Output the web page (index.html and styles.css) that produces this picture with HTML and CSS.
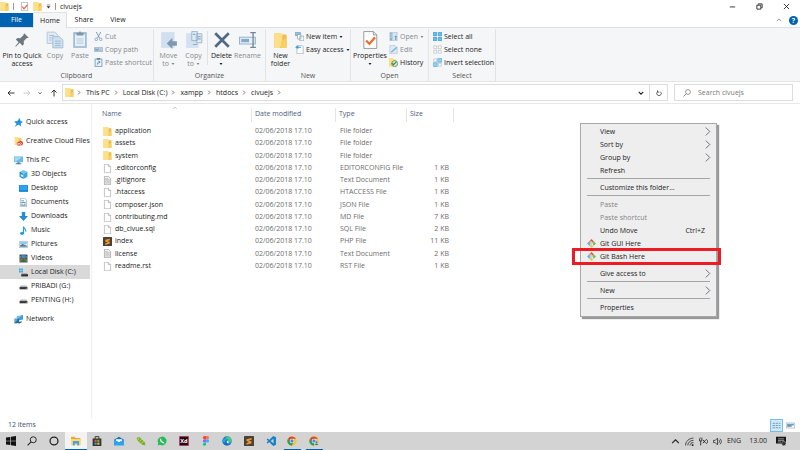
FILE: index.html
```html
<!DOCTYPE html>
<html lang="en">
<head>
<meta charset="utf-8">
<title>civuejs</title>
<link rel="stylesheet" href="styles.css">
</head>
<body>
<svg class="sprite" aria-hidden="true">
  <symbol id="folder" viewBox="0 0 16 16"><path fill="#e9bd4f" d="M1 0h8v2h6v14H1z"/><path fill="#ffe08a" d="M1 0h9v11l-1 5H1z"/><path fill="#f8d06c" d="M9 9l6-2v9H9z"/></symbol>
  <symbol id="page" viewBox="0 0 16 16"><path fill="#fff" stroke="#999" d="M2.5.5h7l4 4v11h-11z"/><path fill="#e8e8e8" stroke="#999" d="M9.500.5v4h4"/></symbol>
  <symbol id="text" viewBox="0 0 16 16"><path fill="#f0f0f0" stroke="#888" d="M2.500.5h7l4 4v11h-11z"/><path stroke="#aaa" d="M4 4.500h5M4 6.500h8M4 8.500h8M4 10.500h8M4 12.500h8"/></symbol>
  <symbol id="sublime" viewBox="0 0 16 16"><rect width="16" height="16" rx="1" fill="#45423f"/><path fill="#f79a1d" d="M4 5l8-2v3L7.500 7.200 12 8.600v2.800L4 14v-3l4.500-1.400L4 8z"/></symbol>
  <symbol id="check" viewBox="0 0 16 16"><path fill="#fff" stroke="#888" d="M2.500.5h11v15h-11z"/><path fill="none" stroke="#e05a3a" stroke-width="2" d="M4 8l3 4 6-7"/></symbol>
  <symbol id="star" viewBox="0 0 16 16"><path fill="#2592dd" d="M10 0l1.500 5 4.500 2-4 2.500.5 5.500L8 11.500 1 16l3.500-6L0 6l6-.5z"/></symbol>
  <symbol id="cc" viewBox="0 0 16 16"><path fill="#ffe08a" d="M1 0h7v2h5v12H1z"/><path fill="#f0c65b" d="M8 2h5v12H8z"/><circle cx="8" cy="12" r="3.500" fill="#d83b26"/><circle cx="12" cy="11" r="4" fill="#d83b26"/><path fill="none" stroke="#fff" stroke-width="1.200" d="M11 13l-4-2a1.500 1.500 0 1 0 0 2.500l4-3a1.500 1.500 0 1 1 0 2.500"/></symbol>
  <symbol id="pc" viewBox="0 0 16 16"><path fill="#5aa9d8" d="M0 1h16v10H0z"/><path fill="#a9dcf5" d="M1 2h14L3 10H1z"/><path fill="#6bc0ec" d="M15 2v8H3z"/><path fill="#527996" d="M6 11h4v2h3v1.500H3V13h3z"/></symbol>
  <symbol id="cube" viewBox="0 0 16 16"><path fill="#74c7ec" d="M8 0l7 3-7 3.500L1 3z"/><path fill="#1687d0" d="M1 3l7 3.500V16l-7-4z"/><path fill="#38a9e4" d="M15 3L8 6.500V16l7-4z"/><path fill="#d7f2ff" d="M3 7l4 2v4l-4-2z"/></symbol>
  <symbol id="desktop" viewBox="0 0 16 16"><path fill="#1482d2" d="M0 2h16v12H0z"/><path fill="#2da4ec" d="M1 3h14v8H1z"/></symbol>
  <symbol id="docs" viewBox="0 0 16 16"><path fill="#fff" stroke="#7694aa" d="M2.500.5h8l3 3v12h-11z"/><path stroke="#4e88ae" stroke-width="1.500" d="M4 5h5M4 8h8M4 11h3M9 11h3M4 13h8"/></symbol>
  <symbol id="down" viewBox="0 0 16 16"><path fill="#258bd2" d="M5 0h6v7h5l-8 9-8-9h5z"/></symbol>
  <symbol id="music" viewBox="0 0 16 16"><path fill="none" stroke="#249be3" stroke-width="2" d="M8 13V1c1 4 5 4 4 9"/><ellipse cx="5.500" cy="13" rx="3.500" ry="3" fill="#249be3"/></symbol>
  <symbol id="pics" viewBox="0 0 16 16"><path fill="#eef7fb" stroke="#8b9da9" d="M.5 2.500h15v11H.5z"/><path fill="#7dc3e9" d="M2 4h12v3H2z"/><path fill="#54799a" d="M2 9l5-2 7 3v2H2z"/></symbol>
  <symbol id="video" viewBox="0 0 16 16"><path fill="#333" d="M1 1h14v14H1z"/><path stroke="#ddd" stroke-dasharray="1 1.500" stroke-width="1.500" d="M2.500 1v14M13.500 1v14"/><path fill="#3e91c9" d="M4 2h8v5H4z"/><path fill="#bd9c43" d="M4 8h8v6H4z"/><path fill="#396c41" d="M4 11l4-3 4 3v3H4z"/></symbol>
  <symbol id="drive" viewBox="0 0 16 16"><path fill="#b4b4b4" d="M3 6h10l2 3H1z"/><path fill="#353535" d="M1 9h14v4H1z"/><path fill="#7bd184" d="M12 10.500h2v1h-2z"/></symbol>
  <symbol id="cdrive" viewBox="0 0 16 16"><path fill="#27a4e2" d="M0 1h3v3H0zM4 1h3v3H4zM0 5h3v3H0zM4 5h3v3H4z"/><path fill="#aaa" d="M5 9h9l1 2H4z"/><path fill="#333" d="M4 11h12v4H4z"/></symbol>
  <symbol id="network" viewBox="0 0 16 16"><path fill="#3f9bd4" d="M5 2l11-2v8L5 10z"/><path fill="#83caec" d="M6 3l9-2-9 6z"/><path fill="#236da5" d="M1 6l8 1v7l-8 1z"/><path fill="#65b7e1" d="M2 7l5 1-5 5z"/><path fill="#316d98" d="M9 12l5-1v2l-6 3z"/></symbol>
  <symbol id="git" viewBox="0 0 16 16"><path fill="#f05133" d="M8 0l4 4-4 4-4-4z"/><path fill="#69c06a" d="M12 4l4 4-4 4-4-4z"/><path fill="#f3c24d" d="M8 8l4 4-4 4-4-4z"/><path fill="#68b3e5" d="M4 4l4 4-4 4-4-4z"/><path fill="none" stroke="#fff" stroke-width="1.300" d="M6 3l4 5v4M7 5v6"/></symbol>
  <symbol id="chrome" viewBox="0 0 16 16"><circle cx="8" cy="8" r="7.500" fill="#fbc52d"/><path fill="#df4435" d="M1.500 4.300A7.500 7.500 0 0 1 14.500 4.500H8L4.700 9.500z"/><path fill="#28a35a" d="M1.500 4.300A7.500 7.500 0 0 0 7.500 15.500L10.800 10 5 9.500z"/><circle cx="8" cy="8" r="3.600" fill="#fff"/><circle cx="8" cy="8" r="2.700" fill="#4285f4"/></symbol>
  <symbol id="chev" viewBox="0 0 8 8"><path fill="none" stroke="currentColor" d="M2.500 1l3 3-3 3"/></symbol>
  <symbol id="more" viewBox="0 0 8 8"><path fill="none" stroke="currentColor" stroke-width=".8" d="M2.500.5L6 4 2.500 7.500"/></symbol>
  <symbol id="vee" viewBox="0 0 8 8"><path fill="none" stroke="currentColor" stroke-width="1.500" d="M1 2.500l3 3 3-3"/></symbol>
  <symbol id="hat" viewBox="0 0 8 8"><path fill="none" stroke="currentColor" d="M1 5.500l3-3 3 3"/></symbol>
  <symbol id="tri" viewBox="0 0 8 8"><path fill="currentColor" d="M1 2h6L4 6z"/></symbol>
  <symbol id="search" viewBox="0 0 16 16"><circle cx="10" cy="6" r="4.800" fill="none" stroke="currentColor" stroke-width="1.500"/><path stroke="currentColor" stroke-width="1.700" d="M6.500 9.500L1 15"/></symbol>
  <symbol id="left" viewBox="0 0 16 16"><path fill="none" stroke="currentColor" stroke-width="1.800" d="M15 8H2M7 3L2 8l5 5"/></symbol>
</svg>

<div class="window">
  <header class="titlebar">
    <svg class="ic"><use href="#folder"/></svg><span class="bar"></span>
    <svg class="ic"><use href="#check"/></svg>
    <svg class="ic"><use href="#folder"/></svg>
    <svg class="tiny customize" viewBox="0 0 8 8"><path fill="#333" d="M1 1h6v1H1zM1 3.500h6L4 7z"/></svg><span class="bar second"></span>
    <h1>civuejs</h1>
    <div class="winbtns">
      <button aria-label="Minimize"><svg viewBox="0 0 8 8"><path stroke="#222" d="M1 4.500h6"/></svg></button>
      <button aria-label="Restore"><svg viewBox="0 0 8 8"><path fill="none" stroke="#222" d="M1 2.500h4.500V7H1zM2.500 2V1H7v4.500H6"/></svg></button>
      <button aria-label="Close"><svg viewBox="0 0 8 8"><path stroke="#222" d="M1 1l6 6M7 1L1 7"/></svg></button>
    </div>
  </header>
  <nav class="tabs">
    <button class="file">File</button><button class="current">Home</button><button>Share</button><button>View</button>
    <span class="help"><button aria-label="Collapse ribbon"><svg class="mid"><use href="#hat"/></svg></button><button aria-label="Help" class="q">?</button></span>
  </nav>

  <section class="ribbon">
    <div class="group clipboard">
      <div class="tools">
        <button class="big"><svg viewBox="0 0 16 16"><path fill="#6e7880" d="M10 2l4 4-2 .5-2.500 2.500.2 2.500L8.500 13 6 10.500 2.500 14 2 13.500 5 10 2.500 7.500 4 6.300l2.500.2L9 4z"/></svg><span>Pin to Quick<br>access</span></button>
        <button class="big dim"><svg viewBox="0 0 16 16"><path fill="#dfeaf5" stroke="#a9bfd3" stroke-width=".7" d="M1 1h7l2 2v8H1z"/><path fill="#cfe0f0" stroke="#9db6cd" stroke-width=".7" d="M6 5h6l3 3v7H6z"/><path stroke="#9bb7d1" stroke-width=".8" d="M8 9h5M8 11h5M8 13h5M3 4h4M3 6h2M3 8h2"/></svg><span>Copy</span></button>
        <button class="big dim"><svg viewBox="0 0 16 16"><path fill="#9fb9d1" d="M2 1h12v14H2z"/><path fill="#e6f0f9" d="M3.500 3h9v10.500h-9z"/><path fill="#8195a8" d="M5 1.500h2L8 0l1 1.500h2V4H5z"/><path stroke="#bdd1e3" d="M5 7h6M5 9h6M5 11h6"/></svg><span>Paste</span></button>
        <div class="stack dim">
          <button><svg viewBox="0 0 16 16"><path stroke="#7590a9" stroke-width="1.500" d="M4 0l6 11M12 0L6 11"/><circle cx="4" cy="13" r="2.300" fill="none" stroke="#7ca4c7" stroke-width="1.500"/><circle cx="12" cy="13" r="2.300" fill="none" stroke="#7ca4c7" stroke-width="1.500"/></svg>Cut</button>
          <button><svg viewBox="0 0 16 16"><path fill="#b8d1e6" stroke="#86a4be" d="M.5 4.500h15v7H.5z"/><path fill="none" stroke="#66839c" d="M2 6l1.500 4L5 7l1.500 3L8 6M10 9.500h1M12 9.500h1"/></svg>Copy path</button>
          <button><svg viewBox="0 0 16 16"><path fill="#91aec8" d="M1 1h14v15H1z"/><path fill="#edf5fc" d="M3 3h10v11H3z"/><path fill="#6f8499" d="M5 0h6v3H5z"/><path fill="none" stroke="#5080ad" stroke-width="1.500" d="M6 12c0-4 1-5 4-5M8 5l3 2-3 3"/></svg>Paste shortcut</button>
        </div>
      </div>
      <div class="caption">Clipboard</div>
    </div>
    <div class="group organize">
      <div class="tools">
        <button class="big dim"><svg viewBox="0 0 16 16"><path fill="#d0e0ef" d="M1 1h12v14H1z"/><path fill="#7f99b0" d="M6 11l5-5v3h4v4h-4v3z"/></svg><span>Move<br>to <svg class="tiny"><use href="#tri"/></svg></span></button>
        <button class="big dim"><svg viewBox="0 0 16 16"><path fill="#d2e2f1" d="M1 2h11v13H1z"/><path fill="#dceaf6" stroke="#91abc2" stroke-width=".7" d="M6 .5h5v8H6zM10 2.500h5v8h-5z"/><path stroke="#91abc2" d="M7 3h2M11 5h3M11 7h3M7 12h4"/></svg><span>Copy<br>to <svg class="tiny"><use href="#tri"/></svg></span></button>
        <span class="split"></span>
        <button class="big"><svg viewBox="0 0 16 16"><path stroke="#4e6a85" stroke-width="2.400" d="M2 2l12 12M14 2L2 14"/></svg><span>Delete<br><svg class="tiny"><use href="#tri"/></svg></span></button>
        <button class="big dim"><svg viewBox="0 0 16 16"><path fill="#e9f2fa" stroke="#98b2ca" d="M.5 5.500h14v6H.5z"/><path fill="#85a9cc" d="M2 7h7v3H2z"/><path fill="none" stroke="#71879b" stroke-width="1.200" d="M10 1.500h5M12.500 1.500v13M10 14.500h5"/></svg><span>Rename</span></button>
      </div>
      <div class="caption">Organize</div>
    </div>
    <div class="group new">
      <div class="tools">
        <button class="big"><svg viewBox="0 0 16 16"><path fill="#edbf50" d="M2 2h6v1h5v12H2z"/><path fill="#ffe08a" d="M2 2h7v9l-2 4H2z"/><path fill="#f8cf65" d="M8 9l5-3v9H8z"/></svg><span>New<br>folder</span></button>
        <div class="stack">
          <button><svg viewBox="0 0 16 16"><path fill="#91bfdf" stroke="#6790ad" d="M.5.5h9v6h-9z"/><path fill="#fff" stroke="#718b9e" d="M4.500 4.500h6v8h-6zM8.500 7.500h7v8h-7z"/></svg>New item <svg class="tiny"><use href="#tri"/></svg></button>
          <button><svg viewBox="0 0 16 16"><path fill="#fff" stroke="#8294a3" d="M3.500.5h9l2 2v13h-11z"/><path fill="#3d97d3" d="M0 4l6-3v2h5v2H6v2z"/></svg>Easy access <svg class="tiny"><use href="#tri"/></svg></button>
        </div>
      </div>
      <div class="caption">New</div>
    </div>
    <div class="group open">
      <div class="tools">
        <button class="big"><svg viewBox="0 0 16 16"><path fill="#fff" stroke="#929292" stroke-width=".8" d="M2.500.5H11l3 3v12H2.500z"/><path fill="none" stroke="#929292" stroke-width=".8" d="M11 .5v3h3"/><path fill="none" stroke="#ec6c2d" stroke-width="2" d="M4.500 8.500l3 3 5-6"/></svg><span>Properties<br><svg class="tiny"><use href="#tri"/></svg></span></button>
        <div class="stack">
          <button class="dim"><svg viewBox="0 0 16 16"><path fill="#d5e5f2" stroke="#9bb7ce" d="M1.500.5h13v15h-13z"/><path fill="#8eadc6" d="M2 1h4v14H2z"/><path stroke="#fff" d="M3 4h2M3 7h2M3 10h2"/><path fill="#7196b6" d="M9 9l3-3 3 3h-2v5h-2V9z"/></svg>Open <svg class="tiny"><use href="#tri"/></svg></button>
          <button class="dim"><svg viewBox="0 0 16 16"><path fill="#dceaf5" stroke="#a2bace" d="M1.500.5h9l4 4v11h-13z"/><path stroke="#8aafce" stroke-width="2.500" d="M4 13l10-9"/></svg>Edit</button>
          <button><svg viewBox="0 0 16 16"><path fill="#ffdd80" d="M0 0h7v2h5v13H0z"/><circle cx="10" cy="10" r="5.300" fill="#dce9da" stroke="#41804b" stroke-width="1.300"/><path fill="none" stroke="#318441" stroke-width="2" d="M5 9l3 3 5-5"/></svg>History</button>
        </div>
      </div>
      <div class="caption">Open</div>
    </div>
    <div class="group select">
      <div class="tools">
        <div class="stack">
          <button><svg viewBox="0 0 16 16"><path fill="#63bdf0" stroke="#2786c4" d="M.5.5h6v6h-6zM9.500.5h6v6h-6zM.5 9.500h6v6h-6zM9.500 9.500h6v6h-6z"/></svg>Select all</button>
          <button><svg viewBox="0 0 16 16"><path fill="#fff" stroke="#a9adb0" d="M1.500 1.500h5v5h-5zM9.500 1.500h5v5h-5zM1.500 9.500h5v5h-5zM9.500 9.500h5v5h-5z"/></svg>Select none</button>
          <button><svg viewBox="0 0 16 16"><path fill="#fff" stroke="#a9adb0" d="M1.500 1.500h5v5h-5zM9.500 9.500h5v5h-5z"/><path fill="#8ed0f5" stroke="#49a1d6" d="M8.500.5h7v7h-7zM.5 8.500h7v7h-7z"/></svg>Invert selection</button>
        </div>
      </div>
      <div class="caption">Select</div>
    </div>
  </section>

  <div class="addressbar">
    <div class="navbtns">
      <button aria-label="Back"><svg class="ic"><use href="#left"/></svg></button>
      <button aria-label="Forward" class="fwd"><svg class="ic"><use href="#left"/></svg></button>
      <button aria-label="Recent"><svg class="tiny"><use href="#vee"/></svg></button>
      <button aria-label="Up" class="up"><svg class="ic"><use href="#left"/></svg></button>
    </div>
    <div class="path">
      <svg class="ic"><use href="#folder"/></svg>
      <svg class="sep"><use href="#chev"/></svg><a href="#">This PC</a>
      <svg class="sep"><use href="#chev"/></svg><a href="#">Local Disk (C:)</a>
      <svg class="sep"><use href="#chev"/></svg><a href="#">xampp</a>
      <svg class="sep"><use href="#chev"/></svg><a href="#">htdocs</a>
      <svg class="sep"><use href="#chev"/></svg><a href="#">civuejs</a>
      <svg class="sep"><use href="#chev"/></svg>
      <button class="drop" aria-label="Previous locations"><svg class="mid"><use href="#vee"/></svg></button>
      <button class="refresh" aria-label="Refresh"><svg class="mid" viewBox="0 0 8 8"><path fill="none" stroke="#333" d="M2 2.300a3 3 0 1 0 4 0M2 .5v2.300h2.300"/></svg></button>
    </div>
    <label class="search"><svg class="ic"><use href="#search"/></svg><input type="text" placeholder="Search civuejs" aria-label="Search civuejs"></label>
  </div>

  <main class="content">
    <nav class="sidebar">
      <a href="#"><svg class="ic"><use href="#star"/></svg>Quick access</a>
      <a href="#" class="spaced"><svg class="ic"><use href="#cc"/></svg>Creative Cloud Files</a>
      <a href="#" class="spaced"><svg class="ic"><use href="#pc"/></svg>This PC</a>
      <a href="#" class="sub"><svg class="ic"><use href="#cube"/></svg>3D Objects</a>
      <a href="#" class="sub"><svg class="ic"><use href="#desktop"/></svg>Desktop</a>
      <a href="#" class="sub"><svg class="ic"><use href="#docs"/></svg>Documents</a>
      <a href="#" class="sub"><svg class="ic"><use href="#down"/></svg>Downloads</a>
      <a href="#" class="sub"><svg class="ic"><use href="#music"/></svg>Music</a>
      <a href="#" class="sub"><svg class="ic"><use href="#pics"/></svg>Pictures</a>
      <a href="#" class="sub"><svg class="ic"><use href="#video"/></svg>Videos</a>
      <a href="#" class="sub chosen"><svg class="ic"><use href="#cdrive"/></svg>Local Disk (C:)</a>
      <a href="#" class="sub"><svg class="ic"><use href="#drive"/></svg>PRIBADI (G:)</a>
      <a href="#" class="sub"><svg class="ic"><use href="#drive"/></svg>PENTING (H:)</a>
      <a href="#" class="spaced"><svg class="ic"><use href="#network"/></svg>Network</a>
    </nav>
    <div class="files">
      <table>
        <thead><tr><th class="name">Name<svg class="tiny sort"><use href="#hat"/></svg></th><th class="date">Date modified</th><th class="type">Type</th><th class="size">Size</th></tr></thead>
        <tbody>
          <tr><td><svg class="ic"><use href="#folder"/></svg>application</td><td>02/06/2018 17.10</td><td>File folder</td><td></td></tr>
          <tr><td><svg class="ic"><use href="#folder"/></svg>assets</td><td>02/06/2018 17.10</td><td>File folder</td><td></td></tr>
          <tr><td><svg class="ic"><use href="#folder"/></svg>system</td><td>02/06/2018 17.10</td><td>File folder</td><td></td></tr>
          <tr><td><svg class="ic"><use href="#page"/></svg>.editorconfig</td><td>02/06/2018 17.10</td><td>EDITORCONFIG File</td><td>1 KB</td></tr>
          <tr><td><svg class="ic"><use href="#text"/></svg>.gitignore</td><td>02/06/2018 17.10</td><td>Text Document</td><td>1 KB</td></tr>
          <tr><td><svg class="ic"><use href="#page"/></svg>.htaccess</td><td>02/06/2018 17.10</td><td>HTACCESS File</td><td>1 KB</td></tr>
          <tr><td><svg class="ic"><use href="#page"/></svg>composer.json</td><td>02/06/2018 17.10</td><td>JSON File</td><td>1 KB</td></tr>
          <tr><td><svg class="ic"><use href="#page"/></svg>contributing.md</td><td>02/06/2018 17.10</td><td>MD File</td><td>7 KB</td></tr>
          <tr><td><svg class="ic"><use href="#page"/></svg>db_civue.sql</td><td>02/06/2018 17.10</td><td>SQL File</td><td>2 KB</td></tr>
          <tr><td><svg class="ic"><use href="#sublime"/></svg>index</td><td>02/06/2018 17.10</td><td>PHP File</td><td>11 KB</td></tr>
          <tr><td><svg class="ic"><use href="#text"/></svg>license</td><td>02/06/2018 17.10</td><td>Text Document</td><td>2 KB</td></tr>
          <tr><td><svg class="ic"><use href="#page"/></svg>readme.rst</td><td>02/06/2018 17.10</td><td>RST File</td><td>1 KB</td></tr>
        </tbody>
      </table>
    </div>
  </main>

  <footer class="status">
    <span>12 items</span>
    <div class="views">
      <button class="on" aria-label="Details view"><svg viewBox="0 0 16 16"><path stroke="#4f7d9b" stroke-width="1.300" stroke-dasharray="4 1.500" d="M1 4h14M1 8h14M1 12h14"/></svg></button>
      <button aria-label="Large icons view"><svg viewBox="0 0 16 16"><path fill="#fff" stroke="#8a9aa6" d="M.5 3.500h15v9H.5z"/><path fill="#5aa5d4" d="M2 5h12v3H2z"/><path fill="#45617a" d="M2 8h8v2H2z"/></svg></button>
    </div>
  </footer>
</div>

<div class="taskbar">
  <div class="apps">
    <button aria-label="Start"><svg viewBox="0 0 16 16"><path fill="#111" d="M0 2.500l7-1v6H0zM8 1.300L16 0v7.500H8zM0 8.500h7v6l-7-1zM8 8.500h8V16l-8-1.300z"/></svg></button>
    <button aria-label="Search"><svg viewBox="0 0 16 16"><use href="#search"/></svg></button>
    <button aria-label="Cortana"><svg viewBox="0 0 16 16"><circle cx="8" cy="8" r="6.300" fill="none" stroke="#222" stroke-width="2"/></svg></button>
    <button aria-label="File Explorer" class="active"><svg viewBox="0 0 16 16"><path fill="#e9a830" d="M0 1h6l1 2h8v11H0z"/><path fill="#ffdb78" d="M0 5h16v9H0z"/><path fill="#4b9fda" d="M3 8h10v7h-3v-3H6v3H3z"/></svg></button>
    <button aria-label="Store"><svg viewBox="0 0 16 16"><path fill="none" stroke="#333" stroke-width="1.500" d="M5 5V1h6v4"/><path fill="#333" d="M1 4h14v12H1z"/><path fill="#e75435" d="M4 6h3.500v3.500H4z"/><path fill="#6dae38" d="M8.500 6H12v3.500H8.500z"/><path fill="#3ba1df" d="M4 10.500h3.500V14H4z"/><path fill="#f2b52c" d="M8.500 10.500H12V14H8.500z"/></svg></button>
    <button aria-label="Mail"><svg viewBox="0 0 16 16"><path fill="#1474bd" d="M0 6l8-5 8 5v8H0z"/><path fill="#fff" d="M3 5h10v3l-5 2-5-2z"/><path fill="#2ba4ed" d="M0 6l8 4 8-4v9H0z"/></svg></button>
    <button aria-label="Editor"><svg viewBox="0 0 16 16"><path fill="#78af25" d="M1 4c2-3 4-3 5-2l8 8 1 5-5-1-7-6z"/><path stroke="#d8ed91" d="M5 2L3 7M9 5l-3 4M12 8l-3 4"/></svg></button>
    <button aria-label="WhatsApp"><svg viewBox="0 0 16 16"><path fill="#25bd55" d="M8 1a7 7 0 1 1-3.300 13L1 15l1-3.700A7 7 0 0 1 8 1z"/><path fill="none" stroke="#fff" stroke-width="1.900" d="M5.500 4.500c0 3 2.500 6 6 6.500"/></svg></button>
    <button aria-label="Adobe XD"><svg viewBox="0 0 16 16"><rect x=".5" y=".5" width="15" height="15" rx="1" fill="#2b0718" stroke="#e04b73"/><text x="8" y="11.500" class="xd">Xd</text></svg></button>
    <button aria-label="Figma"><svg viewBox="0 0 16 16"><path fill="#f24e1e" d="M5.500 0H8v5H5.500a2.500 2.500 0 0 1 0-5z"/><path fill="#ff7262" d="M8 0h2.500a2.500 2.500 0 0 1 0 5H8z"/><path fill="#a259ff" d="M5.500 5.300H8v5H5.500a2.500 2.500 0 0 1 0-5z"/><circle cx="10.500" cy="7.800" r="2.500" fill="#1abcfe"/><path fill="#0acf83" d="M5.500 10.600H8v2.500a2.500 2.500 0 1 1-2.500-2.500z"/></svg></button>
    <button aria-label="Edge"><svg viewBox="0 0 16 16"><circle cx="8" cy="8" r="7.500" fill="#1472bd"/><path fill="#43c989" d="M6 1c6-2 10 3 9.500 7-1 3-5 3-6 1 1-3-1-5-4-5z"/><path fill="#29a6df" d="M1 7c1-4 6-5 8-1-3-1-5 2-4 5-2-2-4-1-4-4z"/><path fill="#d3e9ed" d="M8 7c3 0 1 4 5 4-3 2-7 0-5-4z"/></svg></button>
    <button aria-label="Sublime Text"><svg viewBox="0 0 16 16"><use href="#sublime"/></svg></button>
    <button aria-label="Visual Studio Code"><svg viewBox="0 0 16 16"><path fill="#1483ca" d="M11.500 0L16 2v12l-4.500 2L1 5.500 2.500 4 12 11.500v-7L2.500 12 1 10.500z"/></svg></button>
    <button aria-label="Chrome" class="running"><svg viewBox="0 0 16 16"><use href="#chrome"/></svg></button>
    <button aria-label="Chrome profile" class="running"><svg viewBox="0 0 16 16"><use href="#chrome"/><circle cx="12" cy="11.500" r="4" fill="#c6cdd1"/><circle cx="12" cy="10" r="1.600" fill="#63727d"/><path fill="#63727d" d="M9 14.500c1-3 5-3 6 0z"/></svg></button>
  </div>
  <div class="tray">
    <svg viewBox="0 0 8 8"><use href="#hat"/></svg>
    <svg viewBox="0 0 16 16"><path fill="none" stroke="#222" stroke-width="1.400" d="M1 15C1 8 7 2 15 2M5 15c0-5 4-9 10-9M9 15c0-3 2-5 6-5"/><path fill="#222" d="M12 13h3v3h-3z"/></svg>
    <svg viewBox="0 0 16 16"><path fill="none" stroke="#222" stroke-width="1.500" d="M1 3v4h4V3M3 7v8M2 1v2M5 1v2M7 5l5 6M12 5l-5 6M13 4c3 2 3 6 0 8"/></svg>
    <svg viewBox="0 0 16 16"><path fill="none" stroke="#222" stroke-width="1.300" d="M1 6h3l4-4v12l-4-4H1zM10 5c2 2 2 4 0 6M12.500 3c3 3 3 7 0 10"/></svg>
    <span class="lang">ENG</span><span class="clock">13.00</span>
    <svg class="note" viewBox="0 0 16 16"><path fill="#151515" d="M0 1h16v11h-4v4l-4-4H0z"/><path stroke="#ddd" d="M3 4.500h10M3 7h10M3 9.500h5"/><circle cx="12.500" cy="12" r="3.500" fill="#333" stroke="#ddd" stroke-width=".7"/></svg>
  </div>
</div>

<div class="menu" role="menu">
  <button role="menuitem">View<svg class="arrow"><use href="#more"/></svg></button>
  <button role="menuitem">Sort by<svg class="arrow"><use href="#more"/></svg></button>
  <button role="menuitem">Group by<svg class="arrow"><use href="#more"/></svg></button>
  <button role="menuitem">Refresh</button>
  <hr>
  <button role="menuitem">Customize this folder...</button>
  <hr>
  <button role="menuitem" disabled>Paste</button>
  <button role="menuitem" disabled>Paste shortcut</button>
  <button role="menuitem">Undo Move<span class="key">Ctrl+Z</span></button>
  <button role="menuitem"><svg class="ic giticon"><use href="#git"/></svg>Git GUI Here</button>
  <button role="menuitem" class="marked"><svg class="ic giticon"><use href="#git"/></svg>Git Bash Here</button>
  <hr>
  <button role="menuitem">Give access to<svg class="arrow"><use href="#more"/></svg></button>
  <hr>
  <button role="menuitem">New<svg class="arrow"><use href="#more"/></svg></button>
  <hr>
  <button role="menuitem">Properties</button>
</div>
</body>
</html>
```
FILE: styles.css
```css
* { box-sizing: border-box; }
body {
  margin: 0;
  min-height: 100vh;
  display: flex;
  flex-direction: column;
  position: relative;
  background: #fff;
  color: #222;
  font: 7px/10px "Open Sans", "Noto Sans", sans-serif;
}
button, input {
  font: inherit;
  color: inherit;
  background: none;
  border: 0;
  padding: 0;
  margin: 0;
}
a { color: inherit; text-decoration: none; }
svg { flex: none; }
.sprite { position: absolute; width: 0; height: 0; }
.ic { width: 9px; height: 9px; }
.tiny { width: 4px; height: 4px; }
.mid { width: 6px; height: 6px; }
.dim { color: #85898e; }
.window { flex: 1; display: flex; flex-direction: column; }

.titlebar { display: flex; align-items: center; height: 13px; gap: 4px; }
.titlebar .bar { width: 1px; height: 7px; background: #999; margin-right: 2px; }
.titlebar .bar.second { margin: 0; }
.titlebar .customize { width: 5px; height: 5px; }
.titlebar h1 { margin: 0; font-size: 7px; font-weight: 400; }
.winbtns { display: flex; margin-left: auto; }
.winbtns button { width: 27px; height: 12px; display: grid; place-items: center; }
.winbtns svg { width: 7px; height: 7px; }

.tabs { display: flex; height: 15px; border-bottom: 1px solid #dfe1e3; }
.tabs > button { width: 34px; height: 14px; }
.tabs .file { width: 33px; background: #0063b1; color: #fff; }
.tabs .current { height: 15px; background: #f5f6f7; border: 1px solid #dfe1e3; border-width: 0 1px; box-shadow: 0 -1px #dfe1e3; }
.help { display: flex; align-items: center; gap: 7px; margin-left: auto; padding-right: 2px; color: #777; }
.help button { display: grid; place-items: center; }
.help .q { width: 9px; height: 9px; border-radius: 50%; background: #0063b1; color: #fff; font-weight: 700; }

.ribbon { display: flex; height: 54px; background: #f5f6f7; border-bottom: 1px solid #e2e3e4; }
.group { border-right: 1px solid #e2e3e4; margin-top: 1px; }
.tools { display: flex; align-items: flex-start; height: 42px; padding-top: 2px; }
.caption { text-align: center; color: #555; }
.clipboard { width: 154px; }
.organize { width: 112px; }
.new { width: 85px; }
.open { width: 78px; }
.select { width: 67px; }
.big { display: flex; flex-direction: column; align-items: center; width: 25px; line-height: 8px; white-space: nowrap; }
.big > svg { width: 18px; height: 18px; margin-bottom: 3px; }
.clipboard .big:first-child { width: 44px; }
.clipboard .big:nth-child(2) { width: 22px; }
.clipboard .big:nth-child(3) { width: 28px; }
.organize .tools { padding-left: 2px; }
.organize .split { width: 1px; height: 34px; background: #e0e1e2; margin-left: 1px; }
.organize .big:nth-child(4) { width: 27px; }
.new .big { width: 29px; }
.open .big { width: 38px; }
.stack button { display: flex; align-items: center; gap: 2px; height: 13px; white-space: nowrap; }
.stack button > svg:first-child { width: 9px; height: 9px; }
.stack { margin-top: -1px; }
.select .tools { padding-left: 4px; }

.addressbar { display: flex; height: 22px; padding: 2px 7px 2px 0; border-bottom: 1px solid #e8e8e8; }
.navbtns { display: flex; align-items: center; justify-content: space-between; width: 62px; padding: 0 4px 0 7px; }
.navbtns button { display: grid; place-items: center; }
.navbtns svg { width: 8px; height: 8px; }
.navbtns .tiny { width: 4px; height: 4px; }
.fwd { color: #c4c4c4; transform: rotate(180deg); }
.up { transform: rotate(90deg); }
.path { flex: 1; display: flex; align-items: center; border: 1px solid #dcdcdc; padding-left: 2px; }
.path .ic { margin-right: 1px; }
.path a { margin: 0 2px 0 3px; }
.sep { width: 6px; height: 5px; margin: 0 1px; }
.drop { margin-left: auto; width: 16px; }
.refresh { width: 18px; align-self: stretch; border-left: 1px solid #dcdcdc; }
.path button { display: grid; place-items: center; }
.search { width: 119px; margin-left: 6px; border: 1px solid #dcdcdc; display: flex; align-items: center; gap: 7px; padding-left: 8px; color: #777; }
.search svg { width: 8px; height: 8px; }
.search input { min-width: 0; flex: 1; outline: 0; }
.search input::placeholder { color: #777; opacity: 1; }

.content { flex: 1; display: flex; }
.sidebar { width: 92px; padding-top: 11px; border-right: 1px solid #f1f1f1; }
.sidebar a { display: flex; align-items: center; gap: 3px; height: 14px; padding-left: 14px; white-space: nowrap; }
.sidebar .spaced { margin-top: 5px; }
.sidebar .sub { padding-left: 19px; }
.sidebar .chosen { background: #d9d9d9; margin-right: 1px; }
.files { flex: 1; padding-left: 10px; }
table { width: 352px; height: 166px; table-layout: fixed; border-collapse: collapse; margin-top: 2px; }
th { height: 19px; text-align: left; font-weight: 400; color: #4c607a; vertical-align: top; line-height: 15px; padding: 0; }
th + th { padding-left: 4px; background: linear-gradient(#e4e4e4, #e4e4e4) 0 2px / 1px 14px no-repeat; }
th:last-child { background: linear-gradient(#e4e4e4, #e4e4e4) 0 2px / 1px 14px no-repeat, linear-gradient(#e4e4e4, #e4e4e4) 100% 2px / 1px 14px no-repeat; }
th.name { width: 149px; position: relative; }
th.date { width: 84px; }
th.type { width: 71px; }
th.size { width: 48px; }
.sort { position: absolute; left: 70px; top: 0; width: 6px; height: 4px; color: #777; }
td { padding: 0 0 0 4px; color: #6d6d6d; white-space: nowrap; line-height: 10px; }
td:nth-child(3) { padding-left: 5px; }
td:first-child { padding-left: 1px; color: #222; }
td:last-child { text-align: right; padding-right: 5px; }
td .ic { vertical-align: middle; margin-right: 3px; }

.status { display: flex; align-items: center; justify-content: space-between; height: 14px; padding: 0 3px 0 8px; color: #3c5069; }
.views { display: flex; gap: 1px; }
.views button { width: 13px; height: 13px; display: grid; place-items: center; }
.views .on { border: 1px solid #73bfe9; background: #cfeafa; }
.views svg { width: 9px; height: 9px; }

.taskbar { display: flex; justify-content: space-between; height: 18px; background: #d3d3d3; }
.apps { width: 325px; display: grid; grid-template-columns: repeat(15, 1fr); }
.apps button { display: grid; place-items: center; color: #222; }
.apps svg { width: 10px; height: 10px; }
.apps .active { background: #f3f3f3; border-bottom: 1px solid #0063b1; }
.apps .running { background: linear-gradient(#0063b1, #0063b1) 50% 100% / 17px 1px no-repeat; }
.xd { fill: #fff; font: 700 9px "Open Sans", sans-serif; text-anchor: middle; }
.tray { display: flex; align-items: center; gap: 5px; padding-right: 14px; }
.tray svg { width: 9px; height: 9px; }
.tray .clock { margin-left: 3px; }
.tray .note { margin-left: 4px; width: 10px; height: 10px; }

.menu {
  position: absolute;
  left: 580px;
  top: 123px;
  width: 137px;
  padding: 1px 0 2px;
  background: #eee;
  border: 1px solid #a8a8a8;
  box-shadow: 2px 2px 1px #999;
}
.menu button { display: flex; align-items: center; width: 100%; height: 13px; padding: 0 4px 0 19px; position: relative; text-align: left; }
.menu button:disabled { color: #858585; }
.menu hr { margin: 1px 6px 2px; border: 0; height: 1px; background: #a5a5a5; }
.arrow { margin-left: auto; width: 9px; height: 9px; color: #5b6472; }
.key { margin-left: auto; padding-right: 7px; }
.giticon { position: absolute; left: 6px; }
.marked::after { content: ""; position: absolute; left: -9px; right: -5px; top: -2px; bottom: -2px; border: 3px solid #ed1c24; }
```
